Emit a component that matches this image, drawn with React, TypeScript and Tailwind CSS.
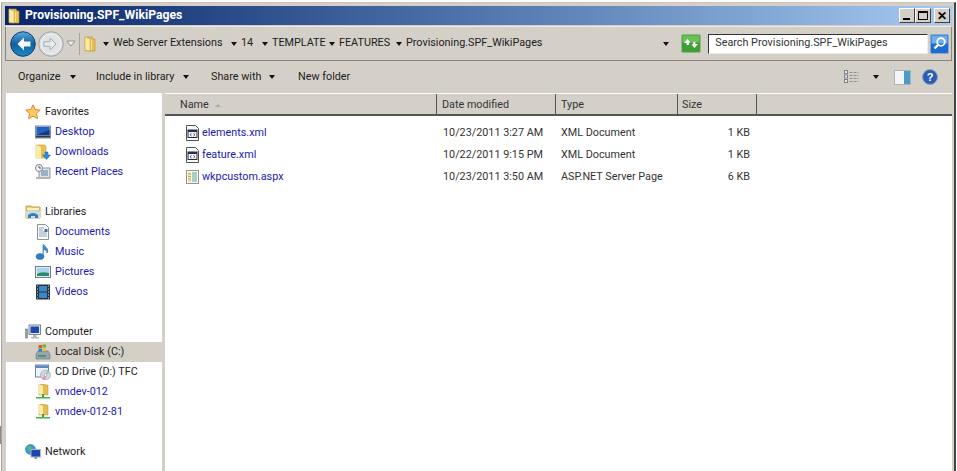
import * as React from "react"

const link = "text-[#1a1ab0]"
const dark = "text-[#1c1c1c]"

function Caret({ className = "" }: { className?: string }) {
  return <span className={`block w-0 h-0 border-x-[3.5px] border-x-transparent border-t-[4px] border-t-[#111] ${className}`} />
}

function Folder({ size = 16 }: { size?: number }) {
  return (
    <svg width={size} height={size} viewBox="0 0 16 16">
      <path d="M3 1h7l1 2h2v12H3z" fill="#e8c04e" stroke="#b8923a" strokeWidth="0.6" />
      <path d="M3 1l5 2v12l-5-1z" fill="#fbe9a4" stroke="#c9a244" strokeWidth="0.5" />
      <path d="M9 4h1v10H9z" fill="#f6dc8a" />
    </svg>
  )
}

function Share() {
  return (
    <svg width="16" height="16" viewBox="0 0 16 16">
      <path d="M4 0h6l1 1h2v10H4z" fill="#e4bd52" stroke="#b8923a" strokeWidth="0.5" />
      <path d="M4 0l4 2v9l-4-1z" fill="#fbe9a4" />
      <path d="M7 10h2v3H7z" fill="#3aa63a" />
      <path d="M1 13h14v1.5H1z" fill="#42b04a" />
    </svg>
  )
}

function Star() {
  return (
    <svg width="16" height="16" viewBox="0 0 16 16">
      <path d="M8 .8l2.2 4.7 5 .6-3.7 3.5 1 5.1L8 12.2l-4.5 2.5 1-5.1L.8 6.1l5-.6z" fill="#fbc964" stroke="#e08a2c" />
    </svg>
  )
}

function Desktop() {
  return (
    <svg width="16" height="16" viewBox="0 0 16 16">
      <rect x="0.5" y="2" width="15" height="12" fill="#b4c4dc" stroke="#7c8ca4" />
      <rect x="1.5" y="3" width="13" height="8" fill="#2460c0" />
      <path d="M1.5 11l13-5v5z" fill="#123a84" />
      <rect x="1" y="11.5" width="14" height="2" fill="#303848" />
    </svg>
  )
}

function Downloads() {
  return (
    <svg width="16" height="16" viewBox="0 0 16 16">
      <path d="M1 1h9l1 2v11H1z" fill="#e8c04e" stroke="#b8923a" strokeWidth="0.5" />
      <path d="M1 1l5 2v12l-5-1z" fill="#fbe9a4" />
      <path d="M10 8h3v3h2.500l-4 4.500-4-4.500H10z" fill="#2a8ce0" stroke="#1460a8" strokeWidth="0.5" />
    </svg>
  )
}

function Recent() {
  return (
    <svg width="16" height="16" viewBox="0 0 16 16">
      <rect x="4" y="4" width="11" height="10" fill="#dfe4ea" stroke="#8b949e" />
      <path d="M6 7h7M6 9h7M6 11h7" stroke="#5a7fa8" />
      <circle cx="4" cy="4" r="3.500" fill="#f3f5f7" stroke="#7d858d" />
      <path d="M4 2v2h2" stroke="#555" fill="none" />
      <rect x="1" y="13" width="14" height="2" fill="#b0b4b8" />
    </svg>
  )
}

function Libraries() {
  return (
    <svg width="16" height="16" viewBox="0 0 16 16">
      <path d="M1 2h5l1 1h8v11H1z" fill="#e8cf83" stroke="#c2a24e" />
      <path d="M2 4h12v2H2z" fill="#fdf3c8" />
      <path d="M1 7h14v7H1z" fill="#cfdbe4" />
      <path d="M3 14v-3q5-4 10 0v3h-3v-2H6v2z" fill="#2f7fb8" />
    </svg>
  )
}

function Doc() {
  return (
    <svg width="16" height="16" viewBox="0 0 16 16">
      <path d="M2.500.5h8l3 3v12h-11z" fill="#fbfcfd" stroke="#8a929a" />
      <path d="M4 4h5M4 6h4M4 8h8M4 10h8M4 12h8" stroke="#9aa2aa" />
      <rect x="9.500" y="5" width="3" height="3" fill="#2f6fb0" />
    </svg>
  )
}

function Music() {
  return (
    <svg width="16" height="16" viewBox="0 0 16 16">
      <ellipse cx="5" cy="12.500" rx="4" ry="3" fill="#2a80c8" stroke="#1a5c9c" strokeWidth="0.5" />
      <path d="M8 12V1l.8-.5c.5 2 4 3 4 6.500 0 1-.3 1.500-.8 2 .2-2-2-3.500-3-3.500" fill="#3a90d4" stroke="#1f68a8" strokeWidth="0.6" />
    </svg>
  )
}

function Pictures() {
  return (
    <svg width="16" height="16" viewBox="0 0 16 16">
      <rect x="0.500" y="2.500" width="15" height="11" fill="#e8ecf0" stroke="#747c84" />
      <rect x="2" y="4" width="12" height="8" fill="#a8d4ec" />
      <path d="M2 10q4-3 12-1v3H2z" fill="#2c8a6c" />
    </svg>
  )
}

function Videos() {
  return (
    <svg width="16" height="16" viewBox="0 0 16 16">
      <rect x="1" y="0.500" width="14" height="15" fill="#28323c" />
      <rect x="4" y="2" width="8" height="5.500" fill="#3a88c8" />
      <rect x="4" y="8.500" width="8" height="5.500" fill="#3a88c8" />
      <path d="M2 2h1M2 5h1M2 8h1M2 11h1M2 14h1M13 2h1M13 5h1M13 8h1M13 11h1M13 14h1" stroke="#dfe4e8" strokeWidth="1.200" />
    </svg>
  )
}

function Computer() {
  return (
    <svg width="16" height="16" viewBox="0 0 16 16">
      <rect x="0.500" y="5" width="2" height="9" fill="#9aa2aa" stroke="#5c6670" strokeWidth="0.500" />
      <rect x="4" y="1" width="11.500" height="9.500" fill="#e4e8ec" stroke="#7c8690" />
      <rect x="5.500" y="2.500" width="8.500" height="6.500" fill="#1a48b0" />
      <path d="M8 11h3.500v2H8zM6 13h8v1.500H6z" fill="#b0b8c0" />
    </svg>
  )
}

function Disk() {
  return (
    <svg width="16" height="16" viewBox="0 0 16 16">
      <path d="M1 10l2-3h10l2 3v5H1z" fill="#9aa6ae" stroke="#66727c" strokeWidth="0.600" />
      <rect x="3" y="11" width="8" height="2" fill="#3f9a78" />
      <rect x="3.500" y="1" width="3.500" height="3" fill="#e4562a" />
      <rect x="7.500" y="0.500" width="3.500" height="3" fill="#6cb13a" />
      <rect x="3.500" y="4.500" width="3.500" height="3" fill="#2f7fd6" />
      <rect x="7.500" y="4" width="3.500" height="3" fill="#f6c02c" />
    </svg>
  )
}

function Cd() {
  return (
    <svg width="16" height="16" viewBox="0 0 16 16">
      <rect x="0.500" y="1" width="13" height="12" fill="#eef2f6" stroke="#6a88a8" />
      <rect x="1" y="1.500" width="12" height="2.500" fill="#5a88c0" />
      <circle cx="10.500" cy="11" r="5" fill="#d8d4e4" stroke="#8c8c9c" strokeWidth="0.500" />
      <path d="M10.500 11l-3.500 3.500a5 5 0 0 0 3.500 1.500z" fill="#e48ca0" />
      <path d="M10.500 11l4-2.500a5 5 0 0 0-2-2.500z" fill="#8ccf9c" />
      <circle cx="10.500" cy="11" r="1.300" fill="#fff" stroke="#8c8c9c" strokeWidth="0.500" />
    </svg>
  )
}

function Network() {
  return (
    <svg width="16" height="16" viewBox="0 0 16 16">
      <circle cx="5.500" cy="5.500" r="5" fill="#3a9ad8" stroke="#1f6ca8" strokeWidth="0.500" />
      <path d="M2 3q3-2 4 0t-2 4zM7 7l3-2v3z" fill="#5cc05c" />
      <rect x="6" y="5.500" width="9.500" height="7.500" fill="#1a48b0" stroke="#b0b8c0" />
      <path d="M9.500 13h2.500v2H9.500z" fill="#8c949c" />
    </svg>
  )
}

function XmlFile() {
  return (
    <svg width="15" height="16" viewBox="0 0 15 16">
      <path d="M1.500.5h9l3 3v12h-12z" fill="#fdfdfd" stroke="#4c5258" />
      <rect x="3" y="5" width="9" height="7.500" fill="#f2f4f6" stroke="#262c34" />
      <rect x="3" y="5" width="9" height="2" fill="#262c54" />
      <path d="M6.500 8.500L5 9.700l1.500 1.200M8.500 8.500L10 9.700l-1.500 1.200" stroke="#24286c" fill="none" strokeWidth="0.800" />
    </svg>
  )
}

function AspxFile() {
  return (
    <svg width="15" height="16" viewBox="0 0 15 16">
      <rect x="1.500" y="1.500" width="12" height="13" fill="#fbfbf0" stroke="#8c9498" />
      <rect x="3" y="3" width="3" height="10" fill="#f0e6a8" />
      <path d="M7 4h5M7 6h5M7 8h5M7 10h5M7 12h5" stroke="#5aa0a0" />
      <path d="M3 5h3M3 7.500h3M3 10h3" stroke="#a09440" strokeWidth="0.700" />
    </svg>
  )
}

function BackButton() {
  return (
    <svg width="26" height="26" viewBox="0 0 26 26" className="block">
      <defs>
        <linearGradient id="bk" x1="0" y1="0" x2="0" y2="1">
          <stop offset="0" stopColor="#5aa8dc" />
          <stop offset="0.500" stopColor="#12609e" />
          <stop offset="1" stopColor="#1a8cc8" />
        </linearGradient>
      </defs>
      <circle cx="13" cy="13" r="12.300" fill="url(#bk)" stroke="#0c3f70" />
      <path d="M14 6.500L7.500 13l6.500 6.500v-4h6.500v-5H14z" fill="#f4f8fb" />
    </svg>
  )
}

function ForwardButton() {
  return (
    <svg width="26" height="26" viewBox="0 0 26 26" className="block">
      <circle cx="13" cy="13" r="12.300" fill="#d8dadc" stroke="#9ea2a6" />
      <circle cx="13" cy="13" r="10" fill="#e0e2e4" stroke="#f4f4f4" />
      <path d="M12 7l6 6-6 6v-3.800H6v-4.400h6z" fill="#e8eaec" stroke="#a8acb0" />
    </svg>
  )
}

function HistoryArrow() {
  return (
    <svg width="10" height="7" viewBox="0 0 10 7" className="block">
      <path d="M1 1h8L5 6z" fill="#eef0f2" stroke="#8c9094" />
    </svg>
  )
}

function Refresh() {
  return (
    <svg width="20" height="19" viewBox="0 0 20 19" className="block">
      <rect x="0.500" y="0.500" width="19" height="18" rx="1.500" fill="#3f9e36" stroke="#8fbc86" />
      <rect x="1.500" y="1.500" width="17" height="7" fill="#6cc05c" />
      <path d="M3 9l3.500-4 3 3.500-1.700.2.200 2-2.200.6-.3-2.300zM17 10l-3.500 4-3-3.500 1.700-.2-.2-2 2.200-.6.300 2.300z" fill="#fff" />
    </svg>
  )
}

function SearchBtn() {
  return (
    <svg width="19" height="20" viewBox="0 0 19 20" className="block">
      <rect x="0.500" y="0.500" width="18" height="19" rx="1.500" fill="#1c6cd4" stroke="#8ca8c8" />
      <rect x="1.500" y="1.500" width="16" height="8" fill="#70aeea" />
      <circle cx="11" cy="8" r="3.800" fill="none" stroke="#fff" strokeWidth="1.800" />
      <path d="M8 11l-3.500 3.500" stroke="#fff" strokeWidth="2.400" />
    </svg>
  )
}

function ViewsIcon() {
  return (
    <svg width="15" height="15" viewBox="0 0 15 15" className="block">
      <path d="M5.500 2.500h9M5.500 5.500h9M5.500 8.500h9M5.500 11.500h9" stroke="#8e9094" strokeDasharray="3 1" />
      <rect x="0.500" y="0.500" width="3" height="3" fill="#eee" stroke="#7c8288" />
      <rect x="0.500" y="5" width="3" height="3" fill="#eee" stroke="#7c8288" />
      <rect x="0.500" y="9.500" width="3" height="3" fill="#eee" stroke="#7c8288" />
    </svg>
  )
}

function PaneIcon() {
  return (
    <svg width="17" height="15" viewBox="0 0 17 15" className="block">
      <rect x="0.500" y="0.500" width="16" height="14" fill="#f4f6f8" stroke="#a8b4bc" />
      <rect x="10" y="1" width="6" height="13" fill="#4a9cc8" />
    </svg>
  )
}

function HelpIcon() {
  return (
    <svg width="16" height="16" viewBox="0 0 16 16" className="block">
      <circle cx="8" cy="8" r="7.500" fill="#2c5cb4" stroke="#8ca4c8" />
      <text x="8" y="12" textAnchor="middle" fontSize="11" fontWeight="700" fill="#fff" fontFamily="Liberation Sans, sans-serif">?</text>
    </svg>
  )
}

function NavRow({ icon, label, color = link, top = false, active = false }: { icon: React.ReactNode; label: string; color?: string; top?: boolean; active?: boolean }) {
  return (
    <div className={`h-5 flex items-center gap-[4px] ${top ? "pl-[19px]" : "pl-[29px]"} ${active ? "bg-[#d4d0c8]" : ""} ${color}`}>
      <span className="w-4 h-4 shrink-0">{icon}</span>
      <span className="whitespace-nowrap">{label}</span>
    </div>
  )
}

function WinBtn({ children }: { children: React.ReactNode }) {
  return (
    <div className="w-[16px] h-[15px] bg-[#d4d0c8] border border-t-white border-l-white border-r-[#404040] border-b-[#404040] flex items-center justify-center">
      {children}
    </div>
  )
}

function Crumb({ label, width }: { label?: string; width: number }) {
  return (
    <div className="flex items-center shrink-0" style={{ width }}>
      <Caret />
      {label && <span className="ml-[4px] whitespace-nowrap">{label}</span>}
    </div>
  )
}

function ToolItem({ label, caretGap, width }: { label: string; caretGap: number; width: number }) {
  return (
    <div className="flex items-center shrink-0" style={{ width }}>
      <span className="whitespace-nowrap">{label}</span>
      <span style={{ marginLeft: caretGap }}>
        <Caret />
      </span>
    </div>
  )
}

const files = [
  { name: "elements.xml", date: "10/23/2011 3:27 AM", type: "XML Document", size: "1 KB", aspx: false },
  { name: "feature.xml", date: "10/22/2011 9:15 PM", type: "XML Document", size: "1 KB", aspx: false },
  { name: "wkpcustom.aspx", date: "10/23/2011 3:50 AM", type: "ASP.NET Server Page", size: "6 KB", aspx: true },
]

export default function App() {
  return (
    <div className="relative w-[957px] h-[471px] overflow-hidden bg-white pt-[2px] pl-[1px] pr-[1px] font-['Roboto',sans-serif] text-[10.800px] text-[#1c1c1c]">
      <span className="absolute left-0 top-[426px] w-px h-[18px] bg-[#8c8c8c]" />
      <div className="h-full bg-[#d4d0c8] border-l border-r-2 border-l-[#a8a49c] border-r-[#444] border-t border-t-[#c8c4bc] pl-[3px] pr-[2px] pt-[3px] flex flex-col">
        {/* title bar */}
        <div className="h-[19px] shrink-0 bg-gradient-to-r from-[#0a246a] to-[#a6caf0] flex items-center pr-[2px]">
          <span className="w-4 h-4 ml-[1px]">
            <Folder />
          </span>
          <span className="ml-[3px] text-white font-bold text-[12.200px] whitespace-nowrap">Provisioning.SPF_WikiPages</span>
          <div className="ml-auto flex">
            <WinBtn>
              <span className="block w-[7px] h-[2px] bg-black mt-[7px] mr-[2px]" />
            </WinBtn>
            <WinBtn>
              <span className="block w-[10px] h-[9px] border border-black border-t-2" />
            </WinBtn>
            <div className="ml-[3px]">
              <WinBtn>
                <span className="font-bold text-[12px] leading-none text-black">✕</span>
              </WinBtn>
            </div>
          </div>
        </div>

        {/* address bar */}
        <div className="h-[35px] shrink-0 mt-[1px] border border-[#8c8880] border-t-[#eeeae2] flex items-center pl-[4px] pr-[2px]">
          <BackButton />
          <div className="ml-[2px]">
            <ForwardButton />
          </div>
          <div className="ml-[2px]">
            <HistoryArrow />
          </div>
          <div className="ml-[3px] w-[601px] h-[22px] border-l border-l-[#a8a49c] flex items-center pl-[2px]">
            <span className="w-[16px] h-4 shrink-0">
              <Folder />
            </span>
            <div className="ml-[5px] flex items-center text-[#1c1c1c]">
              <Crumb label="Web Server Extensions" width={128} />
              <Crumb label="14" width={31} />
              <Crumb label="TEMPLATE" width={67} />
              <Crumb label="FEATURES" width={67} />
              <Crumb label="Provisioning.SPF_WikiPages" width={267} />
              <Crumb width={8} />
            </div>
          </div>
          <div className="ml-[2px]">
            <Refresh />
          </div>
          <div className="ml-[7px] w-[220px] h-[20px] bg-white border border-[#f0ece4] border-t-[#333] border-l-[#333] flex items-center pl-[6px] text-[#333]">
            Search Provisioning.SPF_WikiPages
          </div>
          <div className="ml-[2px]">
            <SearchBtn />
          </div>
        </div>

        {/* command bar */}
        <div className="h-[32px] shrink-0 flex items-center pl-[13px] pr-[14px] text-[#1c1c1c]">
          <ToolItem label="Organize" caretGap={9} width={78} />
          <ToolItem label="Include in library" caretGap={9} width={115} />
          <ToolItem label="Share with" caretGap={8} width={87} />
          <span className="whitespace-nowrap">New folder</span>
          <div className="ml-auto flex items-center">
            <ViewsIcon />
            <Caret className="ml-[14px]" />
            <div className="ml-[15px]">
              <PaneIcon />
            </div>
            <div className="ml-[11px]">
              <HelpIcon />
            </div>
          </div>
        </div>

        {/* body */}
        <div className="flex-1 min-h-0 flex">
          <div className="w-[156px] ml-[1px] shrink-0 bg-white pt-[9px]">
            <NavRow top icon={<Star />} label="Favorites" color={dark} />
            <NavRow icon={<Desktop />} label="Desktop" />
            <NavRow icon={<Downloads />} label="Downloads" />
            <NavRow icon={<Recent />} label="Recent Places" />
            <div className="h-5" />
            <NavRow top icon={<Libraries />} label="Libraries" color={dark} />
            <NavRow icon={<Doc />} label="Documents" />
            <NavRow icon={<Music />} label="Music" />
            <NavRow icon={<Pictures />} label="Pictures" />
            <NavRow icon={<Videos />} label="Videos" />
            <div className="h-5" />
            <NavRow top icon={<Computer />} label="Computer" color={dark} />
            <NavRow active icon={<Disk />} label="Local Disk (C:)" color={dark} />
            <NavRow icon={<Cd />} label="CD Drive (D:) TFC" color={dark} />
            <NavRow icon={<Share />} label="vmdev-012" />
            <NavRow icon={<Share />} label="vmdev-012-81" />
            <div className="h-5" />
            <NavRow top icon={<Network />} label="Network" color={dark} />
          </div>

          <div className="flex-1 ml-[3px] bg-white flex flex-col min-w-0">
            <div className="h-[23px] shrink-0 bg-[#d4d0c8] border-t border-t-white border-b-2 border-b-[#555] flex text-[#333]">
              <div className="w-[272px] pl-[15px] pt-[2px] border-r border-r-[#555] flex items-center gap-[6px]">
                Name
                <span className="block w-0 h-0 border-x-[3px] border-x-transparent border-b-[3px] border-b-[#aaa]" />
              </div>
              <div className="w-[119px] pl-[5px] pt-[2px] border-r border-r-[#555] flex items-center">Date modified</div>
              <div className="w-[122px] pl-[5px] pt-[2px] border-r border-r-[#555] flex items-center">Type</div>
              <div className="w-[79px] pl-[4px] pt-[2px] border-r border-r-[#555] flex items-center">Size</div>
            </div>
            <div className="pt-[6px] text-[#333]">
              {files.map((f) => (
                <div key={f.name} className="h-[22px] flex items-center">
                  <div className="w-[272px] pl-[20px] flex items-center gap-[2px]">
                    <span className="w-[15px] h-4">{f.aspx ? <AspxFile /> : <XmlFile />}</span>
                    <span className={link}>{f.name}</span>
                  </div>
                  <div className="w-[119px] pl-[6px] whitespace-nowrap">{f.date}</div>
                  <div className="w-[122px] pl-[5px] whitespace-nowrap">{f.type}</div>
                  <div className="w-[72px] text-right whitespace-nowrap">{f.size}</div>
                </div>
              ))}
            </div>
          </div>
        </div>
      </div>
    </div>
  )
}
